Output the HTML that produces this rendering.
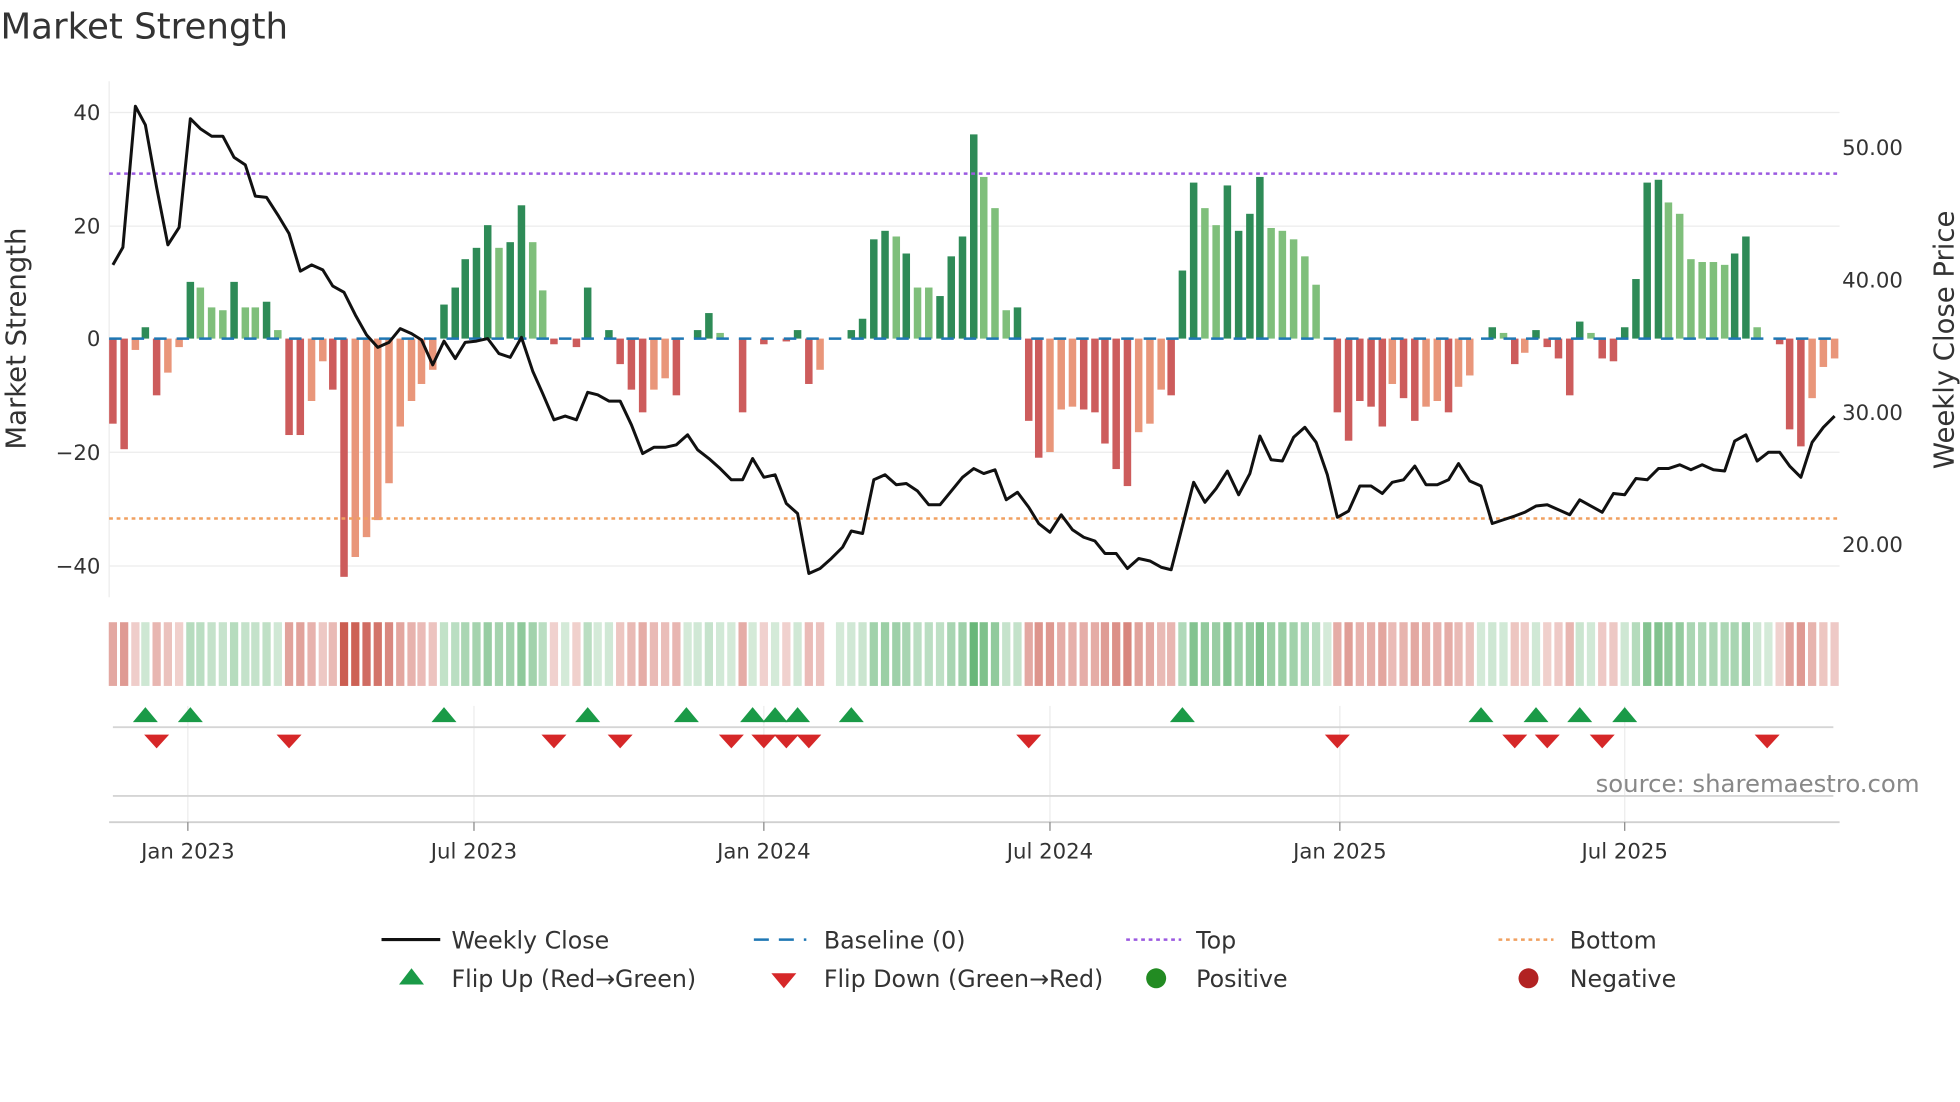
<!DOCTYPE html>
<html><head><meta charset="utf-8"><style>
html,body{margin:0;padding:0;background:#fff;}
svg{display:block;font-family:"DejaVu Sans","Liberation Sans",sans-serif;}
</style></head><body>
<svg id="s" width="1960" height="1102" viewBox="0 0 1568 882" xmlns="http://www.w3.org/2000/svg">
<rect width="1568" height="882" fill="#fff"/>
<text x="0" y="31" font-size="28.5" fill="#333">Market Strength</text>
<g stroke="#ececec" stroke-width="1">
<line x1="87" x2="1472" y1="90" y2="90"/><line x1="87" x2="1472" y1="181" y2="181"/>
<line x1="87" x2="1472" y1="362" y2="362"/><line x1="87" x2="1472" y1="453" y2="453"/>
<line x1="87" x2="87" y1="65" y2="478"/>
</g>
<g font-size="17" fill="#333" text-anchor="end">
<text x="80" y="96">40</text><text x="80" y="187">20</text><text x="80" y="277">0</text>
<text x="80" y="368">−20</text><text x="80" y="459">−40</text>
</g>
<g font-size="17" fill="#333">
<text x="1474" y="124">50.00</text><text x="1474" y="230">40.00</text>
<text x="1474" y="336">30.00</text><text x="1474" y="442">20.00</text>
</g>
<text transform="translate(20,271) rotate(-90)" font-size="22" fill="#333" text-anchor="middle">Market Strength</text>
<text transform="translate(1563,272) rotate(-90)" font-size="22" fill="#333" text-anchor="middle">Weekly Close Price</text>
<g id="bars"></g>
<line x1="87" x2="1472" y1="271" y2="271" stroke="#1f77b4" stroke-width="2" stroke-dasharray="10,8"/>
<line x1="87" x2="1472" y1="139" y2="139" stroke="#9b59e0" stroke-width="2" stroke-dasharray="3,3"/>
<line x1="87" x2="1472" y1="415" y2="415" stroke="#f0a060" stroke-width="2" stroke-dasharray="3,3"/>
<polyline id="price" fill="none" stroke="#111" stroke-width="2.4" stroke-linejoin="round"/>
<g id="heat"></g>
<g stroke="#ececec" stroke-width="1">
<line x1="150" x2="150" y1="565" y2="658"/><line x1="379" x2="379" y1="565" y2="658"/>
<line x1="611" x2="611" y1="565" y2="658"/><line x1="840" x2="840" y1="565" y2="658"/>
<line x1="1072" x2="1072" y1="565" y2="658"/><line x1="1300" x2="1300" y1="565" y2="658"/>
</g>
<line x1="90" x2="1467" y1="582" y2="582" stroke="#d5d5d5" stroke-width="1.5"/>
<line x1="90" x2="1467" y1="637" y2="637" stroke="#d5d5d5" stroke-width="1.5"/>
<line x1="87" x2="1472" y1="658" y2="658" stroke="#d0d0d0" stroke-width="1.5"/>
<g stroke="#888" stroke-width="1">
<line x1="150" x2="150" y1="658" y2="665"/><line x1="379" x2="379" y1="658" y2="665"/>
<line x1="611" x2="611" y1="658" y2="665"/><line x1="840" x2="840" y1="658" y2="665"/>
<line x1="1072" x2="1072" y1="658" y2="665"/><line x1="1300" x2="1300" y1="658" y2="665"/>
</g>
<g id="marks"></g>
<text x="1536" y="634" font-size="19.5" fill="#888" text-anchor="end">source: sharemaestro.com</text>
<g font-size="17" fill="#333" text-anchor="middle">
<text x="150" y="687">Jan 2023</text><text x="379" y="687">Jul 2023</text>
<text x="611" y="687">Jan 2024</text><text x="840" y="687">Jul 2024</text>
<text x="1072" y="687">Jan 2025</text><text x="1300" y="687">Jul 2025</text>
</g>
<g font-size="19" fill="#333">
<line x1="305" x2="352" y1="752" y2="752" stroke="#111" stroke-width="2.5"/>
<text x="361" y="759">Weekly Close</text>
<line x1="603" x2="645" y1="752" y2="752" stroke="#1f77b4" stroke-width="2" stroke-dasharray="12,8"/>
<text x="659" y="759">Baseline (0)</text>
<line x1="901" x2="945" y1="752" y2="752" stroke="#9b59e0" stroke-width="2" stroke-dasharray="3,3"/>
<text x="957" y="759">Top</text>
<line x1="1199" x2="1243" y1="752" y2="752" stroke="#f0a060" stroke-width="2" stroke-dasharray="3,3"/>
<text x="1256" y="759">Bottom</text>
<polygon points="319,788 339,788 329,775" fill="#1a9a47"/>
<text x="361" y="790">Flip Up (Red→Green)</text>
<polygon points="617,779 637,779 627,791" fill="#d62728"/>
<text x="659" y="790">Flip Down (Green→Red)</text>
<circle cx="925" cy="783" r="8" fill="#228b22"/>
<text x="957" y="790">Positive</text>
<circle cx="1223" cy="783" r="8" fill="#b22222"/>
<text x="1256" y="790">Negative</text>
</g>
<script>
var NS="http://www.w3.org/2000/svg";
var B=[[90,-15,0],[99,-19.5,0],[108,-2,1],[116,2,0],[125,-10,0],[134,-6,1],[143,-1.5,1],[152,10,0],[160,9,1],[169,5.5,1],[178,5,1],[187,10,0],[196,5.5,1],[204,5.5,1],[213,6.5,0],[222,1.5,1],[231,-17,0],[240,-17,0],[249,-11,1],[258,-4,1],[266,-9,0],[275,-42,0],[284,-38.5,1],[293,-35,1],[302,-32,1],[311,-25.5,1],[320,-15.5,1],[329,-11,1],[337,-8,1],[346,-5.5,1],[355,6,0],[364,9,0],[372,14,0],[381,16,0],[390,20,0],[399,16,1],[408,17,0],[417,23.5,0],[426,17,1],[434,8.5,1],[443,-1,0],[452,0,0],[461,-1.5,0],[470,9,0],[478,0,1],[487,1.5,0],[496,-4.5,0],[505,-9,0],[514,-13,0],[523,-9,1],[532,-7,1],[541,-10,0],[550,0,0],[558,1.5,0],[567,4.5,0],[576,1,1],[585,0,0],[594,-13,0],[602,0,0],[611,-1,0],[620,0,0],[629,-0.5,0],[638,1.5,0],[647,-8,0],[656,-5.5,1],[672,0,0],[681,1.5,0],[690,3.5,0],[699,17.5,0],[708,19,0],[717,18,1],[725,15,0],[734,9,1],[743,9,1],[752,7.5,0],[761,14.5,0],[770,18,0],[779,36,0],[787,28.5,1],[796,23,1],[805,5,1],[814,5.5,0],[823,-14.5,0],[831,-21,0],[840,-20,1],[849,-12.5,1],[858,-12,1],[867,-12.5,0],[876,-13,0],[884,-18.5,0],[893,-23,0],[902,-26,0],[911,-16.5,1],[920,-15,1],[929,-9,1],[937,-10,0],[946,12,0],[955,27.5,0],[964,23,1],[973,20,1],[982,27,0],[991,19,0],[1000,22,0],[1008,28.5,0],[1017,19.5,1],[1026,19,1],[1035,17.5,1],[1044,14.5,1],[1053,9.5,1],[1062,0,0],[1070,-13,0],[1079,-18,0],[1088,-11,0],[1097,-12,0],[1106,-15.5,0],[1114,-8,1],[1123,-10.5,0],[1132,-14.5,0],[1141,-12,1],[1150,-11,1],[1159,-13,0],[1167,-8.5,1],[1176,-6.5,1],[1185,0,0],[1194,2,0],[1203,1,1],[1212,-4.5,0],[1220,-2.5,1],[1229,1.5,0],[1238,-1.5,0],[1247,-3.5,0],[1256,-10,0],[1264,3,0],[1273,1,1],[1282,-3.5,0],[1291,-4,0],[1300,2,0],[1309,10.5,0],[1318,27.5,0],[1327,28,0],[1335,24,1],[1344,22,1],[1353,14,1],[1362,13.5,1],[1371,13.5,1],[1380,13,1],[1388,15,0],[1397,18,0],[1406,2,1],[1415,0,0],[1424,-1,0],[1432,-16,0],[1441,-19,0],[1450,-10.5,1],[1459,-5,1],[1468,-3.5,1]];
var bars=document.getElementById("bars"),heat=document.getElementById("heat");
B.forEach(function(b){
 var v=b[1],h=Math.abs(v)*4.54,c;
 if(v>=0)c=b[2]?"#7fbf7b":"#2e8b57";else c=b[2]?"#e9967a":"#cd5c5c";
 if(h>0.5){var r=document.createElementNS(NS,"rect");r.setAttribute("x",b[0]-3);r.setAttribute("width",6);
 r.setAttribute("y",v>0?271-h:271);r.setAttribute("height",h);r.setAttribute("fill",c);bars.appendChild(r);}
 var q=document.createElementNS(NS,"rect");q.setAttribute("x",b[0]-3.3);q.setAttribute("width",6.6);
 q.setAttribute("y",498);q.setAttribute("height",51);
 q.setAttribute("fill",v>=0?"#3aa04f":"#c0392b");
 q.setAttribute("fill-opacity",(0.22+0.6*Math.min(1,Math.abs(v)/40)).toFixed(2));heat.appendChild(q);
});
var P="90,212 98,198 108,85 116,100 125,150 134,196 143,182 152,95 160,103 169,109 178,109 187,126 196,132 204,157 213,158 222,172 231,187 240,217 249,212 258,216 266,229 275,234 284,252 293,268 302,278 311,274 320,263 329,267 337,272 346,292 355,273 364,287 372,274 381,273 390,271 399,283 408,286 417,270 426,297 434,315 443,336 452,333 461,336 470,314 478,316 487,321 496,321 505,340 514,363 523,358 532,358 541,356 550,348 558,360 567,367 576,375 585,384 594,384 602,367 611,382 620,380 629,403 638,411 647,459 656,455 665,447 674,438 681,425 690,427 699,384 708,380 717,388 725,387 734,393 743,404 752,404 761,393 770,382 779,375 787,379 796,376 805,400 814,394 823,406 831,419 840,426 849,412 858,424 867,430 876,433 884,443 893,443 902,455 911,447 920,449 929,454 937,456 946,421 955,386 964,402 973,391 982,377 991,396 1000,379 1008,349 1017,368 1026,369 1035,350 1044,342 1053,354 1062,380 1070,414 1079,409 1088,389 1097,389 1106,395 1114,386 1123,384 1132,373 1141,388 1150,388 1159,384 1167,371 1176,385 1185,389 1194,419 1203,416 1212,413 1220,410 1229,405 1238,404 1247,408 1256,412 1264,400 1273,405 1282,410 1291,395 1300,396 1309,383 1318,384 1327,375 1335,375 1344,372 1353,376 1362,372 1371,376 1380,377 1388,353 1397,348 1406,369 1415,362 1424,362 1432,373 1441,382 1450,354 1459,342 1468,333";
document.getElementById("price").setAttribute("points",P);
var m=document.getElementById("marks");
function tri(pts,fill){var p=document.createElementNS(NS,"polygon");p.setAttribute("points",pts);p.setAttribute("fill",fill);m.appendChild(p);}
[116,152,355,470,549,602,620,638,681,946,1185,1229,1264,1300].forEach(function(x){tri((x-10)+",578 "+(x+10)+",578 "+x+",566","#1a9a47");});
[125,231,443,496,585,611,629,647,823,1070,1212,1238,1282,1414].forEach(function(x){tri((x-10)+",588 "+(x+10)+",588 "+x+",599","#d62728");});
</script>
</svg>
</body></html>
